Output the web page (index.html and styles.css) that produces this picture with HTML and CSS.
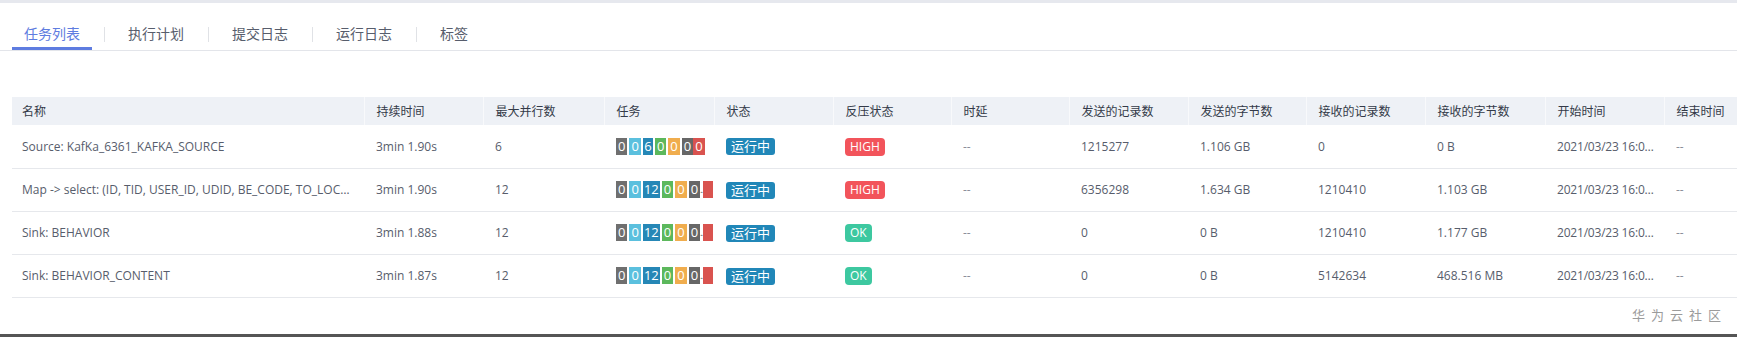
FILE: index.html
```html
<!DOCTYPE html>
<html lang="zh-CN">
<head>
    <meta charset="UTF-8">
    <title>任务列表</title>
    <link rel="stylesheet" href="styles.css">
</head>
<body>
    <div class="topline"></div>
    <nav class="tabs">
        <a class="tab active">任务列表</a>
        <span class="sep"></span>
        <a class="tab">执行计划</a>
        <span class="sep"></span>
        <a class="tab">提交日志</a>
        <span class="sep"></span>
        <a class="tab">运行日志</a>
        <span class="sep"></span>
        <a class="tab">标签</a>
    </nav>

    <div class="table-wrap">
        <table class="jobs">
            <colgroup>
                <col class="c-name">
                <col class="c-119">
                <col class="c-121">
                <col class="c-110">
                <col class="c-119">
                <col class="c-118">
                <col class="c-118">
                <col class="c-119">
                <col class="c-118">
                <col class="c-119">
                <col class="c-120">
                <col class="c-119">
                <col class="c-120">
            </colgroup>
            <thead>
                <tr>
                    <th>名称</th>
                    <th>持续时间</th>
                    <th>最大并行数</th>
                    <th>任务</th>
                    <th>状态</th>
                    <th>反压状态</th>
                    <th>时延</th>
                    <th>发送的记录数</th>
                    <th>发送的字节数</th>
                    <th>接收的记录数</th>
                    <th>接收的字节数</th>
                    <th>开始时间</th>
                    <th>结束时间</th>
                </tr>
            </thead>
            <tbody>
                <tr>
                    <td>Source: KafKa_6361_KAFKA_SOURCE</td>
                    <td>3min 1.90s</td>
                    <td>6</td>
                    <td class="tasks">
                        <span class="b gray">0</span><span class="b sky">0</span><span class="b blue">6</span><span class="b green">0</span><span class="b orange">0</span><span class="b dark">0</span><span class="b red">0</span>
                    </td>
                    <td><span class="status">运行中</span></td>
                    <td><span class="bp high">HIGH</span></td>
                    <td class="muted">--</td>
                    <td>1215277</td>
                    <td>1.106 GB</td>
                    <td>0</td>
                    <td>0 B</td>
                    <td class="time">2021/03/23 16:04:12</td>
                    <td class="muted">--</td>
                </tr>
                <tr>
                    <td>Map -&gt; select: (ID, TID, USER_ID, UDID, BE_CODE, TO_LOCAL_TIME, EXTRA)</td>
                    <td>3min 1.90s</td>
                    <td>12</td>
                    <td class="tasks">
                        <span class="b gray">0</span><span class="b sky">0</span><span class="b blue">12</span><span class="b green">0</span><span class="b orange">0</span><span class="b dark">0</span><span class="ell">...</span><span class="b red cut"></span>
                    </td>
                    <td><span class="status">运行中</span></td>
                    <td><span class="bp high">HIGH</span></td>
                    <td class="muted">--</td>
                    <td>6356298</td>
                    <td>1.634 GB</td>
                    <td>1210410</td>
                    <td>1.103 GB</td>
                    <td class="time">2021/03/23 16:04:12</td>
                    <td class="muted">--</td>
                </tr>
                <tr>
                    <td>Sink: BEHAVIOR</td>
                    <td>3min 1.88s</td>
                    <td>12</td>
                    <td class="tasks">
                        <span class="b gray">0</span><span class="b sky">0</span><span class="b blue">12</span><span class="b green">0</span><span class="b orange">0</span><span class="b dark">0</span><span class="ell">...</span><span class="b red cut"></span>
                    </td>
                    <td><span class="status">运行中</span></td>
                    <td><span class="bp ok">OK</span></td>
                    <td class="muted">--</td>
                    <td>0</td>
                    <td>0 B</td>
                    <td>1210410</td>
                    <td>1.177 GB</td>
                    <td class="time">2021/03/23 16:04:12</td>
                    <td class="muted">--</td>
                </tr>
                <tr>
                    <td>Sink: BEHAVIOR_CONTENT</td>
                    <td>3min 1.87s</td>
                    <td>12</td>
                    <td class="tasks">
                        <span class="b gray">0</span><span class="b sky">0</span><span class="b blue">12</span><span class="b green">0</span><span class="b orange">0</span><span class="b dark">0</span><span class="ell">...</span><span class="b red cut"></span>
                    </td>
                    <td><span class="status">运行中</span></td>
                    <td><span class="bp ok">OK</span></td>
                    <td class="muted">--</td>
                    <td>0</td>
                    <td>0 B</td>
                    <td>5142634</td>
                    <td>468.516 MB</td>
                    <td class="time">2021/03/23 16:04:12</td>
                    <td class="muted">--</td>
                </tr>
            </tbody>
        </table>
    </div>

    <div class="watermark">华为云社区</div>
    <div class="bottombar"></div>
</body>
</html>
```

FILE: styles.css
```css
* { box-sizing: border-box; }
html, body { height: 100%; }
body { margin: 0; display: flex; flex-direction: column; overflow: hidden; background: #fff; color: #575d6c; font-family: "Open Sans", "Noto Sans CJK SC", sans-serif; font-size: 12px; }

.topline { height: 3px; background: #e6e8ee; flex: none; }

/* tabs */
.tabs { display: flex; align-items: flex-start; padding-left: 12px; border-bottom: 1px solid #e3e5ea; flex: none; }
.tab { height: 47px; padding: 21px 12px 0; line-height: 20px; font-size: 14px; color: #575d6c; border-bottom: 3px solid transparent; cursor: pointer; white-space: nowrap; }
.tab.active { color: #5e7ce0; border-bottom-color: #5e7ce0; }
.sep { width: 1px; height: 15px; margin: 24px 11px 0 12px; background: #e0e2e6; }

/* table */
.table-wrap { margin: 46px 0 0 12px; overflow: hidden; flex: none; }
.jobs { table-layout: fixed; border-collapse: collapse; width: 1772px; }
.c-name { width: 352px; }
.c-110 { width: 110px; }
.c-118 { width: 118px; }
.c-119 { width: 119px; }
.c-120 { width: 120px; }
.c-121 { width: 121px; }
.jobs th { height: 28px; padding: 0 12px; background: #eef1f6; color: #333a48; font-weight: normal; text-align: left; white-space: nowrap; }
.jobs th + th { border-left: 1px solid #f8f9fb; }
.jobs th:first-child, .jobs td:first-child { padding-left: 10px; }
.jobs td { height: 43px; padding: 0 12px; border-bottom: 1px solid #e6e8ec; white-space: nowrap; overflow: hidden; text-overflow: ellipsis; }
.jobs td.time { padding-right: 4px; letter-spacing: -0.2px; }
.jobs .muted { color: #8a8e99; }

/* task counters */
.jobs td.tasks { text-overflow: clip; font-size: 0; }
.b { display: inline-block; height: 17px; min-width: 10px; margin-right: 2px; padding: 0 2px; line-height: 17px; font-size: 13px; color: #fff; text-align: center; vertical-align: middle; }
.b.gray { background: #6f6f6f; }
.b.sky { background: #5bc0de; }
.b.blue { background: #2687b6; padding: 0 1px; }
.b.green { background: #5cb85c; }
.b.orange { background: #f0ad4e; }
.b.dark { background: #676767; margin-right: 0; }
.b.red { background: #d9534f; }
.b.cut { width: 10px; min-width: 0; margin-right: 0; }
.ell { display: inline-block; width: 3px; overflow: hidden; font-size: 9px; line-height: 17px; color: #888; vertical-align: middle; letter-spacing: -2px; }

.status { display: inline-block; height: 17px; padding: 0 5px; line-height: 17px; border-radius: 3px; background: #2187b8; color: #fff; font-size: 13px; vertical-align: middle; }
.bp { display: inline-block; height: 18px; padding: 0 5px; line-height: 18px; border-radius: 4px; color: #fff; font-size: 12px; vertical-align: middle; }
.bp.high { background: #f2545b; }
.bp.ok { background: #3dc8a0; }

.watermark { margin-top: 8px; padding-right: 10px; text-align: right; font-size: 13px; line-height: 18px; letter-spacing: 6px; color: #9b9b9b; flex: none; }
.bottombar { margin-top: auto; height: 3px; background: #555; flex: none; }
```
